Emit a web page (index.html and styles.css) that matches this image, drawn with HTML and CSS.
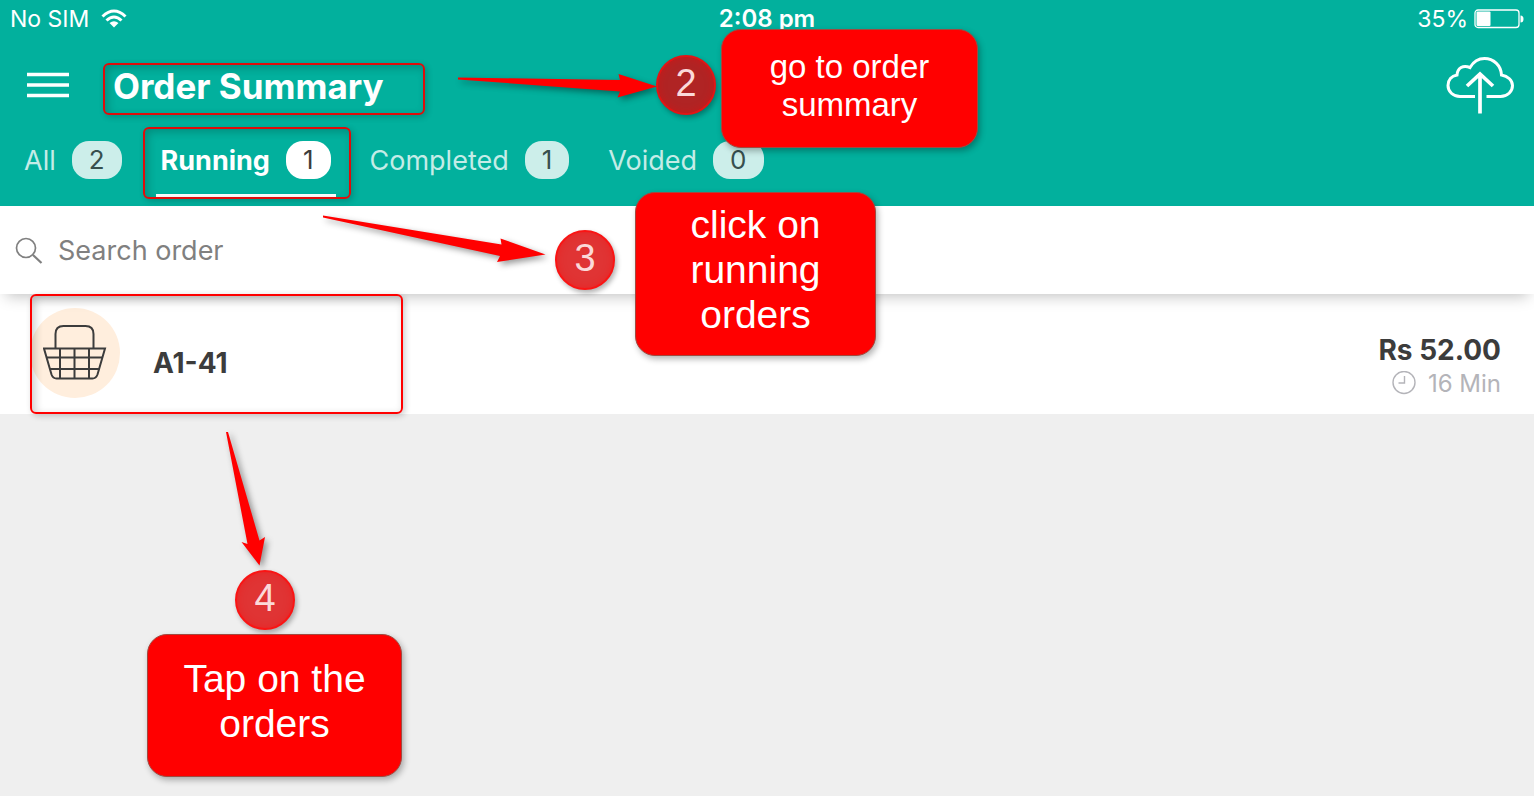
FILE: index.html
```
<!DOCTYPE html>
<html lang="en">

<head>
  <meta charset="utf-8">
  <meta name="viewport" content="width=device-width">
  <title>Order Summary</title>
  <link rel="stylesheet" href="styles.css">
</head>

<body>
  <header>
    <div class="status">
      <div class="carrier">
        <span>No SIM</span>
        <svg width="26" height="20" viewBox="0 0 26 20" fill="none" stroke="#fff" stroke-width="3">
          <path d="M1.500 7.500Q13 -3.500 24.500 7.500" />
          <path d="M5.500 11.500Q13 4.500 20.500 11.500" />
          <path d="M8.500 14Q13 10.500 17.500 14L13 18.500Z" fill="#fff" stroke="none" />
        </svg>
      </div>
      <time>2:08 pm</time>
      <div class="battery">
        <span>35%</span>
        <svg width="50" height="20" viewBox="0 0 50 20">
          <rect x="1" y="1" width="44" height="17.500" rx="3" fill="none" stroke="#fff" stroke-width="1.300" />
          <rect x="2.500" y="2.500" width="14" height="14.500" rx="1" fill="#fff" />
          <path d="M46.500 6.500Q49.500 6.500 49.500 10Q49.500 13.500 46.500 13.500Z" fill="#fff" />
        </svg>
      </div>
    </div>
    <div class="bar">
      <button class="menu" aria-label="Menu">
        <svg width="42" height="28" viewBox="0 0 42 28" stroke="#fff" stroke-width="3.500">
          <path d="M0 2.500H42M0 13H42M0 23.500H42" />
        </svg>
      </button>
      <h1>Order Summary</h1>
      <button class="upload" aria-label="Upload">
        <svg width="68" height="58" viewBox="0 0 68 58" fill="none" stroke="#fff" stroke-width="3">
          <path d="M29 39.500H14C7 39.500 2 34.500 2 28.500C2 23 5.500 19 11 18C11.500 11 17 7.500 24 10.500C27.500 4.500 32.500 1.500 38.500 1.500C47.500 1.500 55 8.500 55.500 18C62 19 66.500 23.500 66.500 28.500C66.500 34.500 61.500 39.500 54.500 39.500H40.500" />
          <path d="M34 56.500V17M21 29L34 17L47 29" stroke-width="3.700" />
        </svg>
      </button>
    </div>
    <nav>
      <button>All <span>2</span></button>
      <button class="active">Running <span>1</span></button>
      <button>Completed <span>1</span></button>
      <button>Voided <span>0</span></button>
    </nav>
  </header>

  <main>
    <label class="search">
      <svg width="28" height="28" viewBox="0 0 28 28" fill="none" stroke="#808080" stroke-width="1.700">
        <circle cx="11" cy="12" r="9.500" />
        <path d="M18 19L26.500 27" stroke-width="2.200" />
      </svg>
      <input type="text" placeholder="Search order" aria-label="Search order">
    </label>
    <ul>
      <li>
        <div class="basket">
          <svg width="64" height="56" viewBox="0 0 64 56" fill="none" stroke="#3c3c3c" stroke-width="2">
            <path d="M12.500 23V9Q12.500 1 20.500 1H42.500Q50.500 1 50.500 9V23" />
            <path d="M1 23.500H62L54.500 49.500Q53 53.500 49.500 53.500H13.500Q10 53.500 8.500 49.500Z" />
            <path d="M4 32.500H59M7 44H56.500M17 23V53M31.500 23V53M46 23V53" />
          </svg>
        </div>
        <h2>A1-41</h2>
        <div class="info">
          <b>Rs 52.00</b>
          <span>
            <svg width="24" height="26" viewBox="0 0 24 26" fill="none" stroke="#b4b4b9" stroke-width="1.400">
              <circle cx="12" cy="11.500" r="11" />
              <path d="M12.500 5V12H6.500" />
            </svg>
            16 Min
          </span>
        </div>
      </li>
    </ul>
  </main>

  <!-- tutorial notes, laid over the screen -->
  <div class="notes">
    <div class="frame f1"></div>
    <div class="frame f2"></div>
    <div class="frame f3"></div>
    <svg class="arrows" width="700" height="600" viewBox="0 0 700 600" fill="#f00">
      <path d="M458 77.500L620 80L618.500 74L657 86.500L617.500 97.500L620 91.500L458 79.500Z" />
      <path d="M323 215.500L501.500 244.500L500.500 238.500L545.500 254.500L497 262L500 256L323 217.500Z" />
      <path d="M226 432H228L259.500 540.500L265 537L259.500 565.500L241.500 542L247.500 544Z" />
    </svg>
    <div class="step s2">2</div>
    <div class="step s3">3</div>
    <div class="step s4">4</div>
    <p class="note n2">go to order<br>summary</p>
    <p class="note n3">click on<br>running<br>orders</p>
    <p class="note n4">Tap on the<br>orders</p>
  </div>
</body>

</html>
```
FILE: styles.css
```
* {
  box-sizing: border-box;
}

body {
  margin: 0;
  min-height: 100vh;
  position: relative;
  background: #efefef;
  font-family: Inter, "Liberation Sans", sans-serif;
  color: #3c3c3c;
}

button {
  display: flex;
  align-items: center;
  border: 0;
  padding: 0;
  background: none;
  color: inherit;
  font: inherit;
  cursor: pointer;
}

svg {
  display: block;
  flex: none;
}

header {
  background: #02b09d;
  color: #fff;
}

.status {
  display: grid;
  grid-template-columns: 1fr auto 1fr;
  align-items: center;
  height: 37px;
  padding: 0 10px;
  font-size: 23px;
}

.carrier,
.battery {
  display: flex;
  align-items: center;
  gap: 12px;
}

.battery {
  justify-content: flex-end;
  gap: 6px;
}

.status time {
  font-size: 24px;
  font-weight: 600;
}

.bar {
  display: flex;
  align-items: center;
  height: 97px;
  padding: 0 20px 0 27px;
}

h1 {
  flex: 1;
  margin: 0 0 0 44px;
  font-size: 35px;
  font-weight: 700;
}

nav {
  display: flex;
  gap: 29px;
  height: 72px;
  padding: 0 19px;
}

nav button {
  gap: 16px;
  height: 63px;
  padding: 0 5px 8px;
  border-bottom: 3px solid transparent;
  font-size: 27px;
  color: #c4ece7;
}

nav span {
  padding: 0 17px;
  border-radius: 17px;
  background: #cceeea;
  color: #37504e;
  font-size: 26px;
  font-weight: 400;
  line-height: 38px;
}

nav .active {
  border-color: #fff;
  color: #fff;
  font-weight: 700;
}

.active span {
  background: #fff;
  color: #3c3c3c;
}

.search {
  position: relative;
  display: flex;
  align-items: center;
  gap: 15px;
  height: 88px;
  padding: 0 15px;
  background: #fff;
  box-shadow: 0 8px 14px -6px rgba(0, 0, 0, 0.25);
}

.search input {
  flex: 1;
  padding: 0;
  border: 0;
  outline: 0;
  font: 27px Inter, "Liberation Sans", sans-serif;
}

.search input::placeholder {
  color: #808080;
}

ul {
  margin: 0;
  padding: 0;
  list-style: none;
}

li {
  display: flex;
  align-items: center;
  height: 120px;
  padding: 0 33px 2px 30px;
  background: #fff;
}

.basket {
  display: flex;
  align-items: center;
  justify-content: center;
  width: 90px;
  height: 90px;
  border-radius: 50%;
  background: #ffeedd;
}

h2 {
  flex: 1;
  margin: 20px 0 0 33px;
  font-size: 28px;
  font-weight: 700;
}

.info {
  display: flex;
  flex-direction: column;
  align-items: flex-end;
  padding-top: 27px;
  line-height: 34px;
}

.info b {
  font-size: 28px;
}

.info span {
  display: flex;
  align-items: center;
  gap: 12px;
  font-size: 24px;
  color: #b4b4b9;
}

.notes {
  position: absolute;
  top: 0;
  left: 0;
  font-family: "Liberation Sans", sans-serif;
  pointer-events: none;
}

.notes > * {
  position: absolute;
}

.frame {
  border: 2px solid #e00c0a;
  border-radius: 6px;
  box-shadow: 2px 2px 6px rgba(0, 0, 0, 0.2), inset 3px 3px 8px rgba(0, 0, 0, 0.2);
}

.f1 {
  left: 103px;
  top: 63px;
  width: 322px;
  height: 52px;
}

.f2 {
  left: 143px;
  top: 127px;
  width: 208px;
  height: 72px;
}

.f3 {
  left: 30px;
  top: 294px;
  width: 373px;
  height: 120px;
  border-color: #f00;
}

.arrows {
  top: 0;
  left: 0;
  filter: drop-shadow(3px 3px 3px rgba(0, 0, 0, 0.4));
}

.step {
  width: 60px;
  height: 60px;
  border: 2px solid #fa1414;
  border-radius: 50%;
  background: #e03434;
  box-shadow: 2px 3px 5px rgba(0, 0, 0, 0.3), inset 0 0 8px rgba(255, 0, 0, 0.3);
  color: #fbd9d9;
  font-size: 38px;
  line-height: 52px;
  text-align: center;
}

.s2 {
  left: 656px;
  top: 55px;
  border-color: #e31515;
  background: #b02424;
}

.s3 {
  left: 555px;
  top: 230px;
}

.s4 {
  left: 235px;
  top: 570px;
}

.note {
  margin: 0;
  border: 1px solid #a04a40;
  border-radius: 20px;
  background: #f00;
  box-shadow: 2px 3px 6px rgba(0, 0, 0, 0.3);
  color: #fff;
  font-size: 39px;
  line-height: 45px;
  text-align: center;
}

.n2 {
  left: 721px;
  top: 29px;
  width: 257px;
  height: 119px;
  padding-top: 18px;
  font-size: 33px;
  line-height: 38px;
}

.n3 {
  left: 635px;
  top: 192px;
  width: 241px;
  height: 164px;
  padding-top: 9px;
}

.n4 {
  left: 147px;
  top: 634px;
  width: 255px;
  height: 143px;
  padding-top: 21px;
}
```
